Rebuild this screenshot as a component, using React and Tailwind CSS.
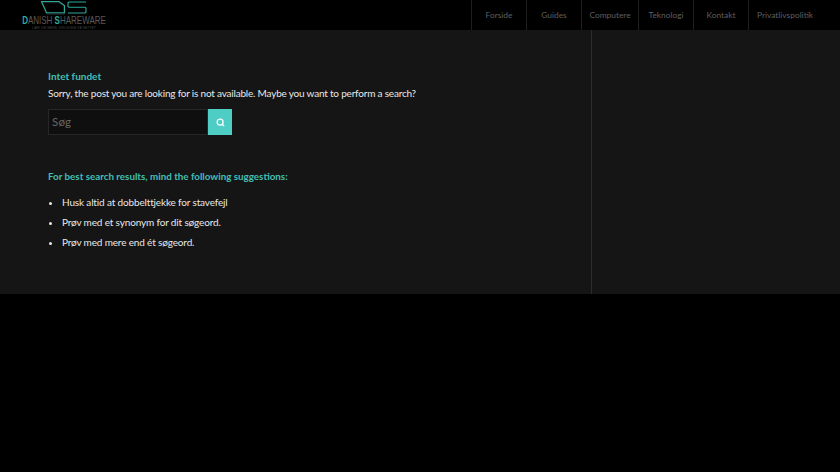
import { Search } from 'lucide-react'

const NAV = [
  { label: 'Forside', cls: 'w-[55px] justify-center' },
  { label: 'Guides', cls: 'w-[55px] justify-center' },
  { label: 'Computere', cls: 'w-[57px] justify-center' },
  { label: 'Teknologi', cls: 'w-[55px] justify-center' },
  { label: 'Kontakt', cls: 'w-[55px] justify-center' },
  { label: 'Privatlivspolitik', cls: 'w-[92px] pl-[8px]' },
]
const TIPS = ['Husk altid at dobbelttjekke for stavefejl', 'Prøv med et synonym for dit søgeord.', 'Prøv med mere end ét søgeord.']

function Logo() {
  return (
    <div className="w-[84px] ml-[22px] h-[30px] flex flex-col items-center font-['Liberation_Sans',sans-serif]">
      <svg className="w-[46px] h-[15px] shrink-0" viewBox="0 0 46 15" fill="none">
        <path d="M1 2.5H18L23 6V14H6Z" stroke="#1c2523" strokeWidth="1.4" />
        <path d="M.5 1.5H18L23.5 5.5V12.8H5.5L.5 1.5Z" stroke="#2ea899" strokeWidth="1.1" />
        <path d="M45 2H28L27 3V6.5L28 7.3H44L45 8V12L44 13H27" stroke="#2ea899" strokeWidth="1.1" />
      </svg>
      <div className="text-[8px] leading-[8px] mt-[2px] scale-y-[1.35] whitespace-nowrap text-[#5a5a5a]">
        <span className="text-[#2ea899] font-bold">D</span>ANISH <span className="text-[#2ea899] font-bold">S</span>HAREWARE
      </div>
      <div className="text-[3.4px] leading-[3px] mt-[2px] whitespace-nowrap text-[#444]">LÆR OM MERE, DIN GUIDE PÅ NETTET</div>
    </div>
  )
}

export default function App() {
  return (
    <div className="h-[472px] bg-black font-['Lato','Liberation_Sans',sans-serif] overflow-hidden">
      <header className="h-[30px] bg-black flex justify-between">
        <Logo />
        <nav className="flex">
          {NAV.map((item) => (
            <a key={item.label} className={`${item.cls} h-[30px] border-l border-[#1e1e1e] flex items-center text-[8.4px] text-[#5f5f5f] whitespace-nowrap`}>
              {item.label}
            </a>
          ))}
        </nav>
      </header>
      <main className="h-[264px] bg-[#151515] flex">
        <div className="w-[591px] pl-[48px] pt-[40px]">
          <h1 className="text-[#42bfb4] text-[10px] font-bold leading-[12px]">Intet fundet</h1>
          <p className="text-[#e8e8e8] text-[10px] tracking-[-.2px] leading-[14px] mt-[4px]">Sorry, the post you are looking for is not available. Maybe you want to perform a search?</p>
          <form className="flex w-[184px] h-[26px] mt-[9px]">
            <div className="w-[160px] bg-[#0f0f0f] border border-[#272727] pl-[3px] flex items-center text-[11.5px] text-[#666] tracking-[.2px]">Søg</div>
            <button type="button" className="w-[24px] bg-[#4ecdc4] flex items-center justify-center text-white">
              <Search size={9} strokeWidth={3.2} />
            </button>
          </form>
          <h2 className="text-[#42bfb4] text-[9.8px] font-bold leading-[12px] mt-[35px]">For best search results, mind the following suggestions:</h2>
          <ul className="mt-[13px] flex flex-col gap-[5.75px] list-disc pl-[14px] text-[#e8e8e8] text-[10px] tracking-[-.15px] leading-[14px]">
            {TIPS.map((tip) => <li key={tip}>{tip}</li>)}
          </ul>
        </div>
        <aside className="flex-1 border-l border-[#2c2c2c]" />
      </main>
    </div>
  )
}
